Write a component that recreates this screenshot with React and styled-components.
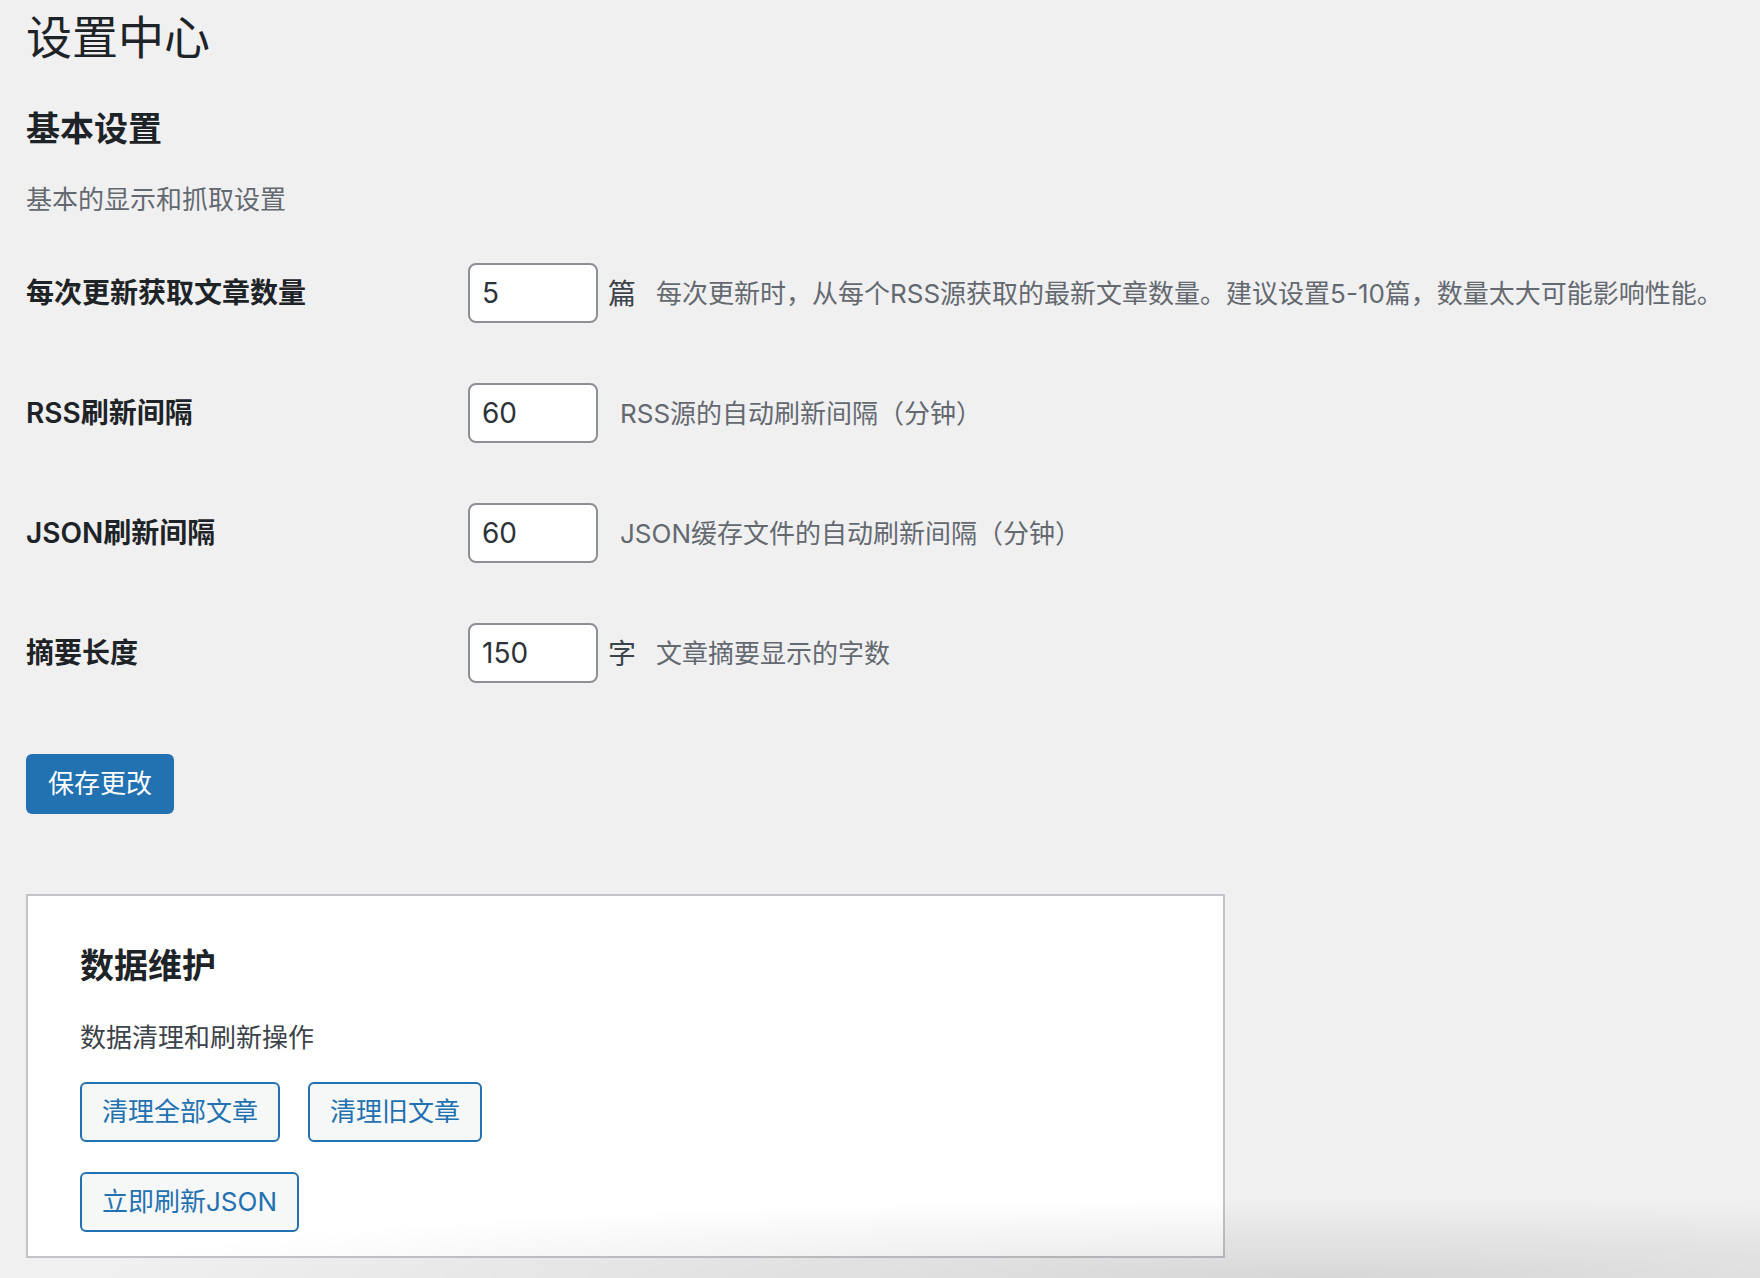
import React from "react";
import styled, { createGlobalStyle } from "styled-components";

const GlobalStyle = createGlobalStyle`
    html, body {
        margin: 0;
        padding: 0;
        background: #f0f0f1;
        min-height: 1278px;
    }

    body {
        font-family: Inter, "Noto Sans CJK SC", sans-serif;
        color: #1d2327;
    }
`;

const Wrap = styled.div`
    padding: 7px 0 0 26px;
    display: flex;
    flex-direction: column;
    align-items: flex-start;
`;

const PageTitle = styled.h1`
    margin: 0;
    font-size: 46px;
    line-height: 60px;
    font-weight: 400;
    color: #1d2327;
`;

const SectionTitle = styled.h2`
    margin: ${(p) => (p.$inCard ? "0" : "40px 0 0")};
    font-size: 34px;
    line-height: 44px;
    font-weight: 600;
    color: #1d2327;
`;

const SectionNote = styled.p`
    margin: ${(p) => (p.$inCard ? "32px 0 0" : "31px 0 0")};
    font-size: 26px;
    line-height: 36px;
    color: ${(p) => (p.$inCard ? "#3c434a" : "#646970")};
`;

const FormTable = styled.div`
    margin-top: 45px;
    display: flex;
    flex-direction: column;
    gap: 60px;
`;

const Row = styled.div`
    display: flex;
    align-items: center;
    height: 60px;
`;

const Label = styled.label`
    width: 442px;
    flex-shrink: 0;
    padding-bottom: 4px;
    font-size: 28px;
    font-weight: 600;
    color: #1d2327;
`;

const NumberInput = styled.input`
    box-sizing: border-box;
    width: 130px;
    height: 60px;
    padding: 0 12px;
    border: 2px solid #8c8f94;
    border-radius: 8px;
    background: #fff;
    font-family: Inter, "Noto Sans CJK SC", sans-serif;
    font-size: 28px;
    color: #2c3338;
    outline: none;
`;

const Unit = styled.span`
    margin-left: 10px;
    padding-bottom: 2px;
    font-size: 28px;
    color: #3c434a;
`;

const Hint = styled.span`
    margin-left: ${(p) => (p.$afterUnit ? "20px" : "22px")};
    padding-bottom: 3px;
    font-size: 26px;
    color: #646970;
    white-space: nowrap;
`;

const Button = styled.button`
    box-sizing: border-box;
    height: 60px;
    padding: 0 20px;
    border-radius: 6px;
    border: 2px solid #2271b1;
    font-family: Inter, "Noto Sans CJK SC", sans-serif;
    font-size: 26px;
    line-height: 56px;
    cursor: pointer;
    background: ${(p) => (p.$primary ? "#2271b1" : "#f6f7f7")};
    color: ${(p) => (p.$primary ? "#fff" : "#2271b1")};
`;

const SaveBar = styled.div`
    margin-top: 71px;
`;

const Card = styled.section`
    box-sizing: border-box;
    margin-top: 80px;
    width: 1199px;
    padding: 48px 52px 24px;
    background: #fff;
    border: 2px solid #c3c4c7;
`;

const ButtonRows = styled.div`
    margin-top: 26px;
    display: flex;
    flex-direction: column;
    gap: 30px;
`;

const ButtonRow = styled.div`
    display: flex;
    gap: 28px;
`;

const ScreenShade = styled.div`
    position: fixed;
    left: 0;
    right: 0;
    bottom: 0;
    height: 80px;
    pointer-events: none;
    background: radial-gradient(
        ellipse 70% 100% at 75% 100%,
        rgba(0, 0, 0, 0.1),
        rgba(0, 0, 0, 0) 100%
    );
`;

const fields = [
    {
        id: "items",
        label: "每次更新获取文章数量",
        value: "5",
        unit: "篇",
        hint: "每次更新时，从每个RSS源获取的最新文章数量。建议设置5-10篇，数量太大可能影响性能。",
    },
    {
        id: "rss",
        label: "RSS刷新间隔",
        value: "60",
        hint: "RSS源的自动刷新间隔（分钟）",
    },
    {
        id: "json",
        label: "JSON刷新间隔",
        value: "60",
        hint: "JSON缓存文件的自动刷新间隔（分钟）",
    },
    {
        id: "excerpt",
        label: "摘要长度",
        value: "150",
        unit: "字",
        hint: "文章摘要显示的字数",
    },
];

function App() {
    return (
        <>
            <GlobalStyle />
            <Wrap>
                <PageTitle>设置中心</PageTitle>
                <SectionTitle>基本设置</SectionTitle>
                <SectionNote>基本的显示和抓取设置</SectionNote>

                <FormTable>
                    {fields.map((f) => (
                        <Row key={f.id}>
                            <Label htmlFor={f.id}>{f.label}</Label>
                            <NumberInput
                                id={f.id}
                                type="text"
                                defaultValue={f.value}
                            />
                            {f.unit && <Unit>{f.unit}</Unit>}
                            <Hint $afterUnit={!!f.unit}>{f.hint}</Hint>
                        </Row>
                    ))}
                </FormTable>

                <SaveBar>
                    <Button $primary>保存更改</Button>
                </SaveBar>

                <Card>
                    <SectionTitle $inCard>数据维护</SectionTitle>
                    <SectionNote $inCard>数据清理和刷新操作</SectionNote>
                    <ButtonRows>
                        <ButtonRow>
                            <Button>清理全部文章</Button>
                            <Button>清理旧文章</Button>
                        </ButtonRow>
                        <ButtonRow>
                            <Button>立即刷新JSON</Button>
                        </ButtonRow>
                    </ButtonRows>
                </Card>
            </Wrap>
            <ScreenShade />
        </>
    );
}

export default App;
